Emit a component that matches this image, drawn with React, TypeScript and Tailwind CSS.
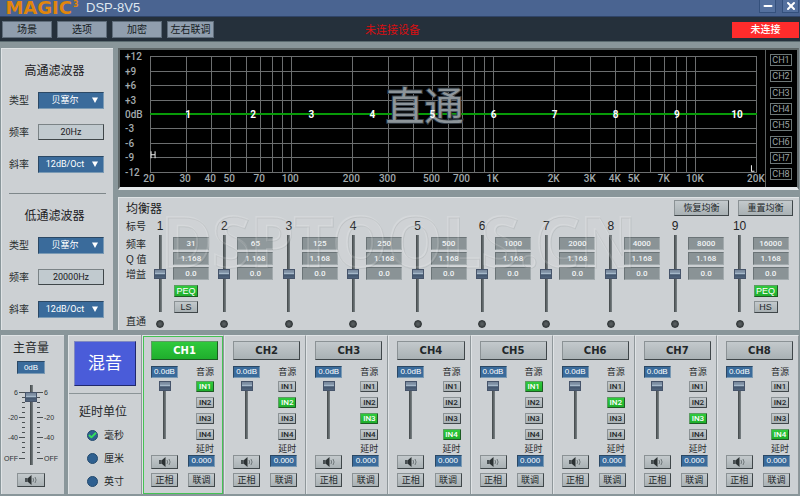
import { useState } from "react"
import { Check, Minus, X } from "lucide-react"
import clsx from "clsx"

const FILTER_TYPES = ["贝塞尔", "巴特沃斯", "宁克-瑞"]
const SLOPES = ["12dB/Oct", "18dB/Oct", "24dB/Oct"]
const CHANNELS = [1, 2, 3, 4, 5, 6, 7, 8]
const INPUTS = [1, 2, 3, 4]
const BANDS = [31, 65, 125, 250, 500, 1000, 2000, 4000, 8000, 16000]
const UNITS = ["毫秒", "厘米", "英寸"]

const RAISED =
  "border border-t-[#8b9295] border-l-[#8b9295] border-r-[#3f4649] border-b-[#3f4649] bg-linear-to-b from-[#c3c9cc] to-[#a9b1b4] text-[#222729]"
const RAISED_GREEN =
  "border border-t-[#5c9a62] border-l-[#5c9a62] border-r-[#1c5a22] border-b-[#1c5a22] bg-linear-to-b from-[#2fca3c] to-[#1fae2d] text-white"
const BLUE_BOX =
  "border border-t-[#2b4864] border-l-[#2b4864] border-r-[#7a9ab4] border-b-[#7a9ab4] bg-[#3a6b9b] text-white"
const PANEL = "bg-[#ccd0d3] border-t border-l border-[#dfe3e5]"
const FADER =
  "block w-3 appearance-none [writing-mode:vertical-lr] [direction:rtl] bg-[linear-gradient(to_right,#3f4547,#7d8588)] bg-[length:3px_100%] bg-center bg-no-repeat [&::-webkit-slider-thumb]:appearance-none [&::-webkit-slider-thumb]:w-3 [&::-webkit-slider-thumb]:h-[10px] [&::-webkit-slider-thumb]:border [&::-webkit-slider-thumb]:border-[#46546a] [&::-webkit-slider-thumb]:bg-[linear-gradient(to_bottom,#76869a_0%,#8496aa_30%,#a9bccd_45%,#41546c_60%,#53667e_100%)]"

function SpeakerIcon() {
  return (
    <svg viewBox="0 0 14 10" className="w-[14px] h-[10px]" aria-hidden="true">
      <path d="M1 3h2.500v4H1z" fill="#4a5154" />
      <path d="M3.500 3.500 7.500 0v10l-4-3.500z" fill="#2b3133" />
      <path d="M9 3q1.200 2 0 4M11 2q2.200 3 0 6" fill="none" stroke="#70787b" strokeWidth="1" />
    </svg>
  )
}

function TitleBar() {
  return (
    <header className="flex h-[17px] items-start bg-[#4a6491] border-b border-[#2f4468]">
      <div className="flex w-[84px] items-start justify-center text-[#e0860c] font-['DejaVu_Sans',sans-serif] font-bold">
        <span className="text-[18px] leading-[15px]">MAGIC</span>
        <sup className="top-0 pl-px text-[8px] leading-[9px]">3</sup>
      </div>
      <h1 className="pl-[2px] text-[13px] leading-[15px] text-[#dfe7f0]">DSP-8V5</h1>
      <div className="ml-auto flex gap-[6px] pr-px">
        <button aria-label="最小化" className="flex h-[13px] w-[17px] items-center justify-center border border-t-0 border-[#34507c] bg-[#54709e] text-white">
          <Minus className="size-3" strokeWidth={4} />
        </button>
        <button aria-label="关闭" className="flex h-[13px] w-[17px] items-center justify-center border border-t-0 border-[#34507c] bg-[#54709e] text-white">
          <X className="size-3" strokeWidth={4} />
        </button>
      </div>
    </header>
  )
}

function Toolbar() {
  return (
    <nav className="flex h-[25px] items-center border-b border-[#5b6b70] bg-[#25303b] pt-px pl-[2px] pr-px">
      <div className="flex flex-1 gap-[5px]">
        {["场景", "选项", "加密", "左右联调"].map((label) => (
          <button
            key={label}
            className={clsx(
              "h-[17px] border border-[#5f6d7b] bg-[#909eae] text-[10px] leading-[15px] text-[#151b22]",
              label.length > 2 ? "w-[47px]" : "w-[50px]"
            )}
          >
            {label}
          </button>
        ))}
      </div>
      <p className="mr-4 text-[11px] leading-4 text-[#d80f12]">未连接设备</p>
      <div className="flex flex-1 justify-end">
        <button className="h-4 w-[67px] bg-[#ff2c2c] text-[10px] font-medium leading-4 text-white">未连接</button>
      </div>
    </nav>
  )
}

function BlueSelect({ id, options }: { id: string; options: string[] }) {
  return (
    <div className="relative w-[66px]">
      <select
        id={id}
        className={clsx(BLUE_BOX, "block h-[17px] w-full appearance-none pr-[12px] text-center text-[9px] leading-[15px] [text-align-last:center] font-['Roboto','Noto_Sans_CJK_SC',sans-serif]")}
      >
        {options.map((o) => <option key={o}>{o}</option>)}
      </select>
      <svg viewBox="0 0 6 6" className="pointer-events-none absolute right-[6px] top-[5px] size-[6px]" aria-hidden="true">
        <path d="M0 0.500h6L3 6z" fill="#fff" />
      </svg>
    </div>
  )
}

function Filter({ id, title, freq }: { id: string; title: string; freq: string }) {
  return (
    <section className="px-[7px] pt-[14px]">
      <h2 className="mb-[13px] pr-[6px] text-center text-[12px] leading-4 text-[#1d2123]">{title}</h2>
      <div className="grid grid-cols-[29px_66px] gap-y-[15px] text-[10px] leading-[17px] text-[#2a2e30]">
        <label htmlFor={`${id}-type`}>类型</label>
        <BlueSelect id={`${id}-type`} options={FILTER_TYPES} />
        <label htmlFor={`${id}-freq`}>频率</label>
        <input
          id={`${id}-freq`}
          defaultValue={freq}
          className="h-4 w-[66px] border border-t-[#7b8386] border-l-[#7b8386] border-r-[#3f4649] border-b-[#3f4649] bg-[#c1cacf] text-center text-[9px] text-[#1c2022] font-['Roboto',sans-serif]"
        />
        <label htmlFor={`${id}-slope`}>斜率</label>
        <BlueSelect id={`${id}-slope`} options={SLOPES} />
      </div>
    </section>
  )
}

// plot geometry: 202 units per decade, 4.8 units per dB
const fx = (f: number) => Math.round(30 + Math.log10(f / 20) * 202)
const dy = (db: number) => Math.round(64 - db * 4.8)
const GRID = [20, 30, 40, 50, 60, 70, 80, 90, 100, 200, 300, 400, 500, 600, 700, 800, 900, 1000, 2000, 3000, 4000, 5000, 6000, 7000, 8000, 9000, 10000, 20000]
const FREQ_LABELS = [20, 30, 40, 50, 70, 100, 200, 300, 500, 700, 1000, 2000, 3000, 4000, 5000, 7000, 10000, 20000]
const DBS = [12, 9, 6, 3, 0, -3, -6, -9, -12]

function ResponseChart() {
  return (
    <svg viewBox="0 0 644 137" className="block h-auto min-w-0 flex-1 font-['Roboto','Noto_Sans_CJK_SC',sans-serif]" role="img" aria-label="频率响应">
      <g stroke="#6c6e6f" strokeWidth="1" shapeRendering="crispEdges">
        {GRID.map((f) => <line key={f} x1={fx(f)} x2={fx(f)} y1={dy(12)} y2={dy(-12)} />)}
        {DBS.map((d) => <line key={d} x1={fx(20)} x2={fx(20000)} y1={dy(d)} y2={dy(d)} />)}
      </g>
      <line x1={fx(20)} x2={fx(20000)} y1={dy(0)} y2={dy(0)} stroke="#089b08" strokeWidth="2" />
      <text x="304" y="70" fontSize="39" fontWeight="400" textAnchor="middle" fill="#8d959a" stroke="#333c45" strokeWidth="2" paintOrder="stroke">直通</text>
      <g fontSize="10" fontWeight="500" fill="#a3abae">
        {DBS.map((d) => (
          <text key={d} x="5" y={dy(d) + 4}>{d === 0 ? "0dB" : d > 0 ? `+${d}` : d}</text>
        ))}
        {FREQ_LABELS.map((f) => (
          <text key={f} x={fx(f) - 1} y="132" textAnchor="middle">{f >= 1000 ? `${f / 1000}K` : f}</text>
        ))}
      </g>
      <g fontSize="10" fontWeight="700" fill="#fff" textAnchor="middle">
        {BANDS.map((f, i) => <text key={f} x={fx(f)} y="68">{i + 1}</text>)}
      </g>
      <path d="M31 101v7M31 104.500h4M35 101v7M630.500 115v6h3" fill="none" stroke="#eee" />
    </svg>
  )
}

function ResponsePanel() {
  return (
    <section className="flex border-t-2 border-l-2 border-r-2 border-b-[3px] border-t-[#5d6566] border-l-[#5d6566] border-r-[#687072] border-b-[#e6e9eb] bg-black">
      <ResponseChart />
      <div className="flex w-8 flex-col justify-between border-l border-[#5d6262] pt-1 pb-[7px] pl-1">
        {CHANNELS.map((c) => (
          <button key={c} className="h-3 w-[22px] border border-[#6d7777] text-[9px] leading-[10px] text-[#9ba2a3] font-['Roboto',sans-serif]">
            CH{c}
          </button>
        ))}
      </div>
    </section>
  )
}

function Band({ index, freq }: { index: number; freq: number }) {
  const shelf = index === 1 ? "LS" : index === 10 ? "HS" : null
  return (
    <div className="flex gap-[2px]">
      <div className="flex w-[22px] flex-col items-center">
        <span className="text-[12px] leading-[14px] text-[#1f2426]">{index}</span>
        <input type="range" aria-label={`增益 ${index}`} min={-12} max={12} defaultValue={0} className={clsx(FADER, "mt-[2px] h-[77px]")} />
        <button aria-label={`直通 ${index}`} className="mt-2 size-2 rounded-full border border-[#2e3335] bg-[radial-gradient(circle,#5d6365,#34393b)]" />
      </div>
      <div className="flex w-9 flex-col gap-[2px] pt-[18px]">
        {[String(freq), "1.168", "0.0"].map((v, i) => (
          <input
            key={i}
            aria-label={`${["频率", "Q值", "增益"][i]} ${index}`}
            defaultValue={v}
            className="h-[13px] w-full border border-t-[#6b7477] border-l-[#6b7477] border-r-[#a2aaad] border-b-[#a2aaad] bg-[#8a9396] text-center text-[8px] font-medium leading-[11px] text-[#f1f4f5] font-['Roboto',sans-serif]"
          />
        ))}
        {shelf && (
          <>
            <button className={clsx(RAISED_GREEN, "ml-px mt-[3px] h-3 w-6 text-[9px] leading-[10px]")}>PEQ</button>
            <button className={clsx(RAISED, "ml-px mt-[2px] h-3 w-6 text-[9px] leading-[10px]")}>{shelf}</button>
          </>
        )}
      </div>
    </div>
  )
}

function Equalizer() {
  return (
    <section className={clsx(PANEL, "relative pt-[2px] pb-[2px] pl-[7px] pr-[6px]")}>
      <div className="flex items-center gap-[9px]">
        <h2 className="mr-auto pt-[2px] text-[12px] leading-[14px] text-[#1d2123]">均衡器</h2>
        <button className={clsx(RAISED, "h-4 w-[55px] text-[9px] leading-[14px]")}>恢复均衡</button>
        <button className={clsx(RAISED, "h-4 w-[55px] text-[9px] leading-[14px]")}>重置均衡</button>
      </div>
      <div className="flex pt-[3px]">
        <div className="w-[23px] text-[10px] leading-[15px] text-[#26292b]">
          <p className="mb-[3px]">标号</p>
          <p>频率</p>
          <p>Q 值</p>
          <p>增益</p>
          <p className="mt-[33px] leading-[13px]">直通</p>
        </div>
        <div className="grid flex-1 grid-cols-10">
          {BANDS.map((f, i) => <Band key={f} index={i + 1} freq={f} />)}
        </div>
      </div>
      <svg viewBox="0 0 682 133" className="pointer-events-none absolute inset-0 h-full w-full font-['Noto_Sans',sans-serif]" aria-hidden="true">
        <defs>
          <text id="mark" x="41" y="70" fontSize="70" fontWeight="700">DSPTOOLS.CN</text>
        </defs>
        <use href="#mark" fill="#fff" fillOpacity="0.06" stroke="#fff" strokeWidth="2" strokeOpacity="0.16" />
        <use href="#mark" x="1" y="1" fill="none" stroke="#3c4448" strokeOpacity="0.1" />
      </svg>
    </section>
  )
}

function Scale({ side }: { side: "left" | "right" }) {
  const left = side === "left"
  const marks = [
    { y: 7, t: "6" },
    { y: 32, t: "-20" },
    { y: 52, t: "-40" },
    { y: 73, t: "OFF" },
  ]
  return (
    <svg viewBox="0 0 23 80" className="h-20 w-[23px]" aria-hidden="true">
      <g stroke="#4b5154" strokeWidth="1" shapeRendering="crispEdges">
        {marks.map((m) => <line key={m.t} x1={left ? 17 : 0} x2={left ? 23 : 6} y1={m.y} y2={m.y} />)}
        {[12, 17, 22, 27, 37, 42, 47, 57, 62, 67].map((y) => (
          <line key={y} x1={left ? 20 : 0} x2={left ? 23 : 3} y1={y} y2={y} />
        ))}
      </g>
      <g fontSize="7" fill="#2d3234" textAnchor={left ? "end" : "start"}>
        {marks.map((m) => <text key={m.t} x={left ? 16 : 7} y={m.y + 3}>{m.t}</text>)}
      </g>
    </svg>
  )
}

function Master() {
  return (
    <section className={clsx(PANEL, "flex w-[63px] flex-col items-center pt-[5px] pb-[7px] pr-1")}>
      <h2 className="text-[12px] leading-[14px] text-[#26292b]">主音量</h2>
      <output className={clsx(BLUE_BOX, "mt-[6px] h-[13px] w-7 text-center text-[8px] leading-[11px]")}>0dB</output>
      <div className="mt-[11px] flex">
        <Scale side="left" />
        <input type="range" aria-label="主音量" defaultValue={91} className={clsx(FADER, "h-20")} />
        <Scale side="right" />
      </div>
      <button aria-label="静音" className={clsx(RAISED, "mt-2 flex h-[14px] w-7 items-center justify-center")}>
        <SpeakerIcon />
      </button>
    </section>
  )
}

function MixPanel() {
  const [unit, setUnit] = useState(UNITS[0])
  return (
    <section className={clsx(PANEL, "w-[73px]")}>
      <div className="border-b border-[#8b9497] px-[5px] pt-[5px] pb-[7px]">
        <button className="h-[45px] w-full border border-t-[#8089c0] border-l-[#8089c0] border-r-[#20286c] border-b-[#20286c] bg-[#4a5cd9] text-[17px] text-white">
          混音
        </button>
      </div>
      <fieldset className="flex flex-col gap-2 pl-[10px]">
        <legend className="pt-[10px] pb-2 text-[12px] leading-4 text-[#26292b]">延时单位</legend>
        {UNITS.map((u) => (
          <label key={u} className="relative ml-2 flex items-center gap-[6px] text-[10px] leading-[15px] text-[#26292b]">
            <input
              type="radio"
              name="unit"
              checked={unit === u}
              onChange={() => setUnit(u)}
              className="size-[11px] appearance-none rounded-full border border-[#234a6e] bg-[#2f6090]"
            />
            {unit === u && <Check className="pointer-events-none absolute left-px top-[3px] size-[9px] text-[#35e05a]" strokeWidth={5} />}
            {u}
          </label>
        ))}
      </fieldset>
    </section>
  )
}

function ChannelStrip({ channel, active, onSelect }: { channel: number; active: boolean; onSelect: () => void }) {
  const [source, setSource] = useState(((channel - 1) % 4) + 1)
  return (
    <section className="border-t border-l border-r border-t-[#dfe3e5] border-l-[#dfe3e5] border-r-[#8f979a] bg-[#ccd0d3]">
      <div className={clsx("border pt-1 pb-[6px] pl-[7px] pr-1", active ? "border-[#45c254]" : "border-transparent")}>
        <button
          onClick={onSelect}
          className={clsx(active ? RAISED_GREEN : RAISED, "block h-[19px] w-full text-[10px] font-bold leading-[17px] font-['DejaVu_Sans',sans-serif]")}
        >
          CH{channel}
        </button>
        <div className="flex justify-between pt-[6px] pr-[3px]">
          <div className="flex w-[27px] flex-col items-center">
            <output className={clsx(BLUE_BOX, "h-3 w-full text-center text-[8px] leading-[10px]")}>0.0dB</output>
            <input type="range" aria-label={`CH${channel} 音量`} defaultValue={100} className={clsx(FADER, "mt-[3px] h-[58px]")} />
          </div>
          <div className="flex w-[27px] flex-col items-end pr-px text-[9px] text-[#26292b]">
            <span className="leading-3">音源</span>
            <div className="mt-[3px] flex flex-col gap-[5px]">
              {INPUTS.map((n) => (
                <button
                  key={n}
                  onClick={() => setSource(n)}
                  className={clsx(source === n ? RAISED_GREEN : RAISED, "h-[11px] w-[18px] rounded-[1px] text-[8px] font-medium leading-[9px] font-['Roboto',sans-serif]")}
                >
                  IN{n}
                </button>
              ))}
            </div>
            <label htmlFor={`delay-${channel}`} className="mt-[3px] leading-3">延时</label>
          </div>
        </div>
        <div className="grid grid-cols-[27px_27px] justify-between gap-y-1 pr-[3px]">
          <button aria-label={`CH${channel} 静音`} className={clsx(RAISED, "flex h-[14px] items-center justify-center")}>
            <SpeakerIcon />
          </button>
          <input id={`delay-${channel}`} defaultValue="0.000" className={clsx(BLUE_BOX, "h-3 w-[27px] text-center text-[8px]")} />
          <button className={clsx(RAISED, "h-[14px] text-[9px] leading-3")}>正相</button>
          <button className={clsx(RAISED, "h-[14px] text-[9px] leading-3")}>联调</button>
        </div>
      </div>
    </section>
  )
}

export default function App() {
  const [active, setActive] = useState(1)

  return (
    <div className="min-h-screen bg-[#89969a] font-['Liberation_Sans','Noto_Sans_CJK_SC',sans-serif]">
      <TitleBar />
      <Toolbar />
      <main className="flex flex-col gap-[5px] px-px pt-[6px] pb-px">
        <div className="flex gap-[5px]">
          <aside className={clsx(PANEL, "w-[112px] shrink-0 pb-3")}>
            <Filter id="hpf" title="高通滤波器" freq="20Hz" />
            <hr className="mx-[7px] mt-5 border-[#7e878a]" />
            <Filter id="lpf" title="低通滤波器" freq="20000Hz" />
          </aside>
          <div className="flex min-w-0 flex-1 flex-col justify-between gap-[7px]">
            <ResponsePanel />
            <Equalizer />
          </div>
        </div>
        <div className="flex">
          <Master />
          <div className="ml-1 flex min-w-0 flex-1">
            <MixPanel />
            <div className="grid flex-1 grid-cols-8 border-l border-[#8f979a]">
              {CHANNELS.map((c) => (
                <ChannelStrip key={c} channel={c} active={active === c} onSelect={() => setActive(c)} />
              ))}
            </div>
          </div>
        </div>
      </main>
    </div>
  )
}
